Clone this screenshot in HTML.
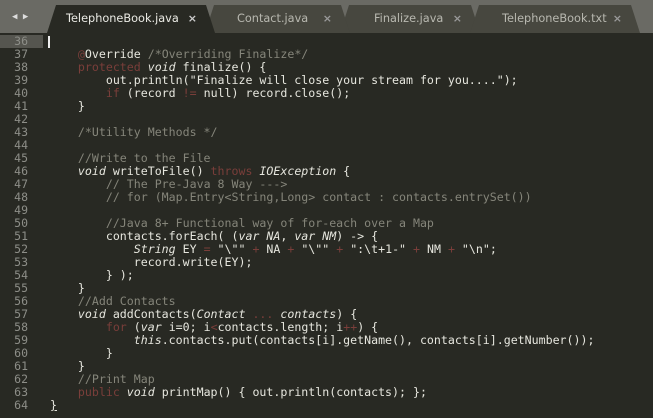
<!DOCTYPE html>
<html><head><style>
body{margin:0;width:653px;height:418px;overflow:hidden;background:#282923;font-family:"DejaVu Sans Mono","Liberation Mono",monospace;}
#bar{position:absolute;left:0;top:0;width:653px;height:33px;background:#6a6a64;}
.tab{position:absolute;top:5px;height:28px;background:#47473f;clip-path:polygon(0 100%,9px 0,calc(100% - 9px) 0,100% 100%);font-family:"DejaVu Sans","Liberation Sans",sans-serif;font-size:11.3px;color:#b8b8b0;line-height:27px;}
.tab span.x{position:absolute;right:18px;font-size:11px;color:#999;font-weight:bold}
.tab.a{background:#282923;color:#eaeae4}
#g{position:absolute;left:0;top:35px;width:28px;text-align:right;font-size:11.5px;line-height:13px;color:#8d8e88;}
#c{position:absolute;left:50px;top:35px;font-size:11.6px;line-height:13px;color:#e6e6de;white-space:pre;}
.k{color:#7a3e3a}.cm{color:#85857a}.i{font-style:italic}.s{color:#e6e6de}
</style></head><body>
<div id="bar"></div>
<div style="position:absolute;left:12px;top:12px;color:#ddd;font-size:9px;">◀ ▶</div>
<div class="tab" style="left:340px;width:140px"><span style="margin-left:34px">Finalize.java</span><span class="x">×</span></div>
<div class="tab" style="left:470px;width:170px"><span style="margin-left:32px">TelephoneBook.txt</span><span class="x">×</span></div>
<div class="tab" style="left:205px;width:145px"><span style="margin-left:32px">Contact.java</span><span class="x">×</span></div>
<div class="tab a" style="left:47px;width:168px"><span style="margin-left:19px">TelephoneBook.java</span><span class="x" style="color:#ccc">×</span></div>
<div style="position:absolute;left:0;top:35px;width:43px;height:13px;background:#55554f"></div>
<div style="position:absolute;left:48px;top:36px;width:2px;height:12px;background:#eee"></div>
<div id="g">36<br>37<br>38<br>39<br>40<br>41<br>42<br>43<br>44<br>45<br>46<br>47<br>48<br>49<br>50<br>51<br>52<br>53<br>54<br>55<br>56<br>57<br>58<br>59<br>60<br>61<br>62<br>63<br>64</div>
<div id="c">
    <span class="k">@</span>Override <span class="cm">/*Overriding Finalize*/</span>
    <span class="k">protected</span> <span class="i">void</span> finalize() {
        out.println("Finalize will close your stream for you....");
        <span class="k">if</span> (record <span class="k">!=</span> null) record.close();
    }

    <span class="cm">/*Utility Methods */</span>

    <span class="cm">//Write to the File</span>
    <span class="i">void</span> writeToFile() <span class="k">throws</span> <span class="i">IOException</span> {
        <span class="cm">// The Pre-Java 8 Way ---&gt;</span>
        <span class="cm">// for (Map.Entry&lt;String,Long&gt; contact : contacts.entrySet())</span>

        <span class="cm">//Java 8+ Functional way of for-each over a Map</span>
        contacts.forEach( (<span class="i">var NA</span>, <span class="i">var NM</span>) -&gt; {
            <span class="i">String</span> EY <span class="k">=</span> "\"" <span class="k">+</span> NA <span class="k">+</span> "\"" <span class="k">+</span> ":\t+1-" <span class="k">+</span> NM <span class="k">+</span> "\n";
            record.write(EY);
        } );
    }
    <span class="cm">//Add Contacts</span>
    <span class="i">void</span> addContacts(<span class="i">Contact</span> <span class="k">...</span> <span class="i">contacts</span>) {
        <span class="k">for</span> (<span class="i">var</span> i=0; i<span class="k">&lt;</span>contacts.length; i<span class="k">++</span>) {
            <span class="i">this</span>.contacts.put(contacts[i].getName(), contacts[i].getNumber());
        }
    }
    <span class="cm">//Print Map</span>
    <span class="k">public</span> <span class="i">void</span> printMap() { out.println(contacts); };
<u>}</u></div>
</body></html>
